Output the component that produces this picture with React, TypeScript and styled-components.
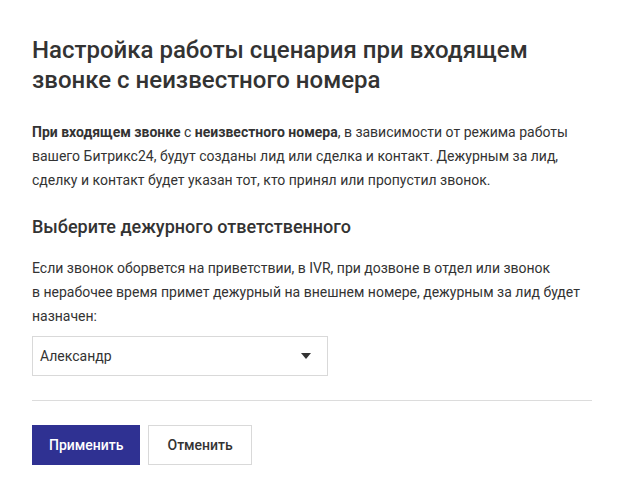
import React from "react";
import styled, { createGlobalStyle } from "styled-components";

const Global = createGlobalStyle`
  html, body { margin: 0; padding: 0; background: #fff; }
  body { font-family: Roboto, "Noto Sans", Arial, sans-serif; color: #333; }
`;

const Page = styled.div`
  width: 560px;
  padding: 35px 32px 32px;
`;

const Title = styled.h1`
  margin: 0;
  font-size: 24px;
  line-height: 30px;
  font-weight: 500;
  color: #333;
`;

const Text = styled.p`
  margin: 0;
  font-size: 14px;
  line-height: 24px;
  color: #333;
`;

const Intro = styled(Text)`
  margin-top: 25px;
`;

const Subtitle = styled.h2`
  margin: 23px 0 0;
  font-size: 18px;
  line-height: 24px;
  font-weight: 500;
  color: #333;
`;

const Note = styled(Text)`
  margin-top: 17px;
`;

const Select = styled.div`
  margin-top: 8px;
  box-sizing: border-box;
  width: 296px;
  height: 40px;
  border: 1px solid #d9d9d9;
  display: flex;
  align-items: center;
  justify-content: space-between;
  padding: 0 16px 0 7px;
  font-size: 14px;
  color: #333;
`;

const Arrow = styled.span`
  width: 0;
  height: 0;
  border-left: 5px solid transparent;
  border-right: 5px solid transparent;
  border-top: 6px solid #333;
`;

const Divider = styled.hr`
  margin: 24px 0 0;
  border: 0;
  border-top: 1px solid #dcdcdc;
`;

const Actions = styled.div`
  display: flex;
  gap: 8px;
  margin-top: 24px;
`;

const Button = styled.button<{ $primary?: boolean }>`
  box-sizing: border-box;
  height: 40px;
  padding: 0 ${(p) => (p.$primary ? "16px" : "18px")};
  font-family: Roboto, "Noto Sans", Arial, sans-serif;
  font-size: 14px;
  font-weight: 500;
  cursor: pointer;
  background: ${(p) => (p.$primary ? "#2f3192" : "#fff")};
  color: ${(p) => (p.$primary ? "#fff" : "#333")};
  border: 1px solid ${(p) => (p.$primary ? "#2f3192" : "#d9d9d9")};
`;

export default function App() {
  return (
    <>
      <Global />
      <Page>
        <Title>
          Настройка работы сценария при входящем
          <br />
          звонке с неизвестного номера
        </Title>
        <Intro>
          <b>При входящем звонке</b> с <b>неизвестного номера</b>, в зависимости от режима работы
          вашего Битрикс24, будут созданы лид или сделка и контакт. Дежурным за лид,
          сделку и контакт будет указан тот, кто принял или пропустил звонок.
        </Intro>
        <Subtitle>Выберите дежурного ответственного</Subtitle>
        <Note>
          Если звонок оборвется на приветствии, в IVR, при дозвоне в отдел или звонок
          <br />
          в нерабочее время примет дежурный на внешнем номере, дежурным за лид будет
          <br />
          назначен:
        </Note>
        <Select>
          <span>Александр</span>
          <Arrow />
        </Select>
        <Divider />
        <Actions>
          <Button $primary>Применить</Button>
          <Button>Отменить</Button>
        </Actions>
      </Page>
    </>
  );
}
